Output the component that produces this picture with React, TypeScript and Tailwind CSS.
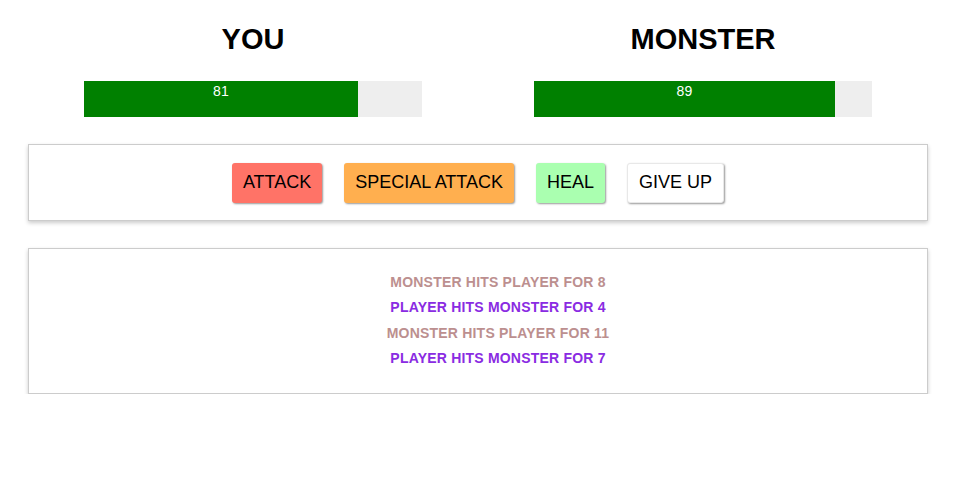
const turns = [
  { text: "MONSTER HITS PLAYER FOR 8", player: false },
  { text: "PLAYER HITS MONSTER FOR 4", player: true },
  { text: "MONSTER HITS PLAYER FOR 11", player: false },
  { text: "PLAYER HITS MONSTER FOR 7", player: true },
];

function HealthColumn({ name, health }: { name: string; health: number }) {
  return (
    <div className="w-1/2 text-center">
      <h1 className="text-[29px] font-bold leading-[34px] mt-[22px] mb-[25px] text-black">{name}</h1>
      <div className="mx-auto w-[338px] h-9 bg-[#eeeeee]">
        <div
          className="h-full bg-[#008000] text-white text-sm leading-5 text-center"
          style={{ width: `${health}%` }}
        >
          {health}
        </div>
      </div>
    </div>
  );
}

export default function App() {
  return (
    <div className="w-[900px] ml-[28px] font-['Liberation_Sans',Arial,sans-serif] text-black bg-white">
      <div className="flex">
        <HealthColumn name="YOU" health={81} />
        <HealthColumn name="MONSTER" health={89} />
      </div>

      <section className="mt-[27px] h-[77px] border border-[#cccccc] shadow-[0_2px_4px_#cccccc] flex items-center justify-center gap-[22px]">
        <button className="h-10 px-[11px] text-[18px] rounded-[3px] bg-[#ff7367] shadow-[1px_1px_2px_#999]">ATTACK</button>
        <button className="h-10 px-[11px] text-[18px] rounded-[3px] bg-[#ffaf4f] shadow-[1px_1px_2px_#999]">SPECIAL ATTACK</button>
        <button className="h-10 px-[11px] text-[18px] rounded-[3px] bg-[#aaffb0] shadow-[1px_1px_2px_#999]">HEAL</button>
        <button className="h-10 px-[11px] text-[18px] rounded-[3px] bg-white shadow-[1px_1px_2px_#999] border border-[#e8e8e8]">GIVE UP</button>
      </section>

      <section className="mt-[27px] h-[146px] border border-[#cccccc] shadow-[0_2px_4px_#cccccc] pt-[21px]">
        <ul className="text-center pl-10">
          {turns.map((t, i) => (
            <li
              key={i}
              className={`text-[14px] tracking-[0.2px] font-bold leading-[25.4px] ${t.player ? "text-[#8a2be2]" : "text-[#bc8f8f]"}`}
            >
              {t.text}
            </li>
          ))}
        </ul>
      </section>
    </div>
  );
}
